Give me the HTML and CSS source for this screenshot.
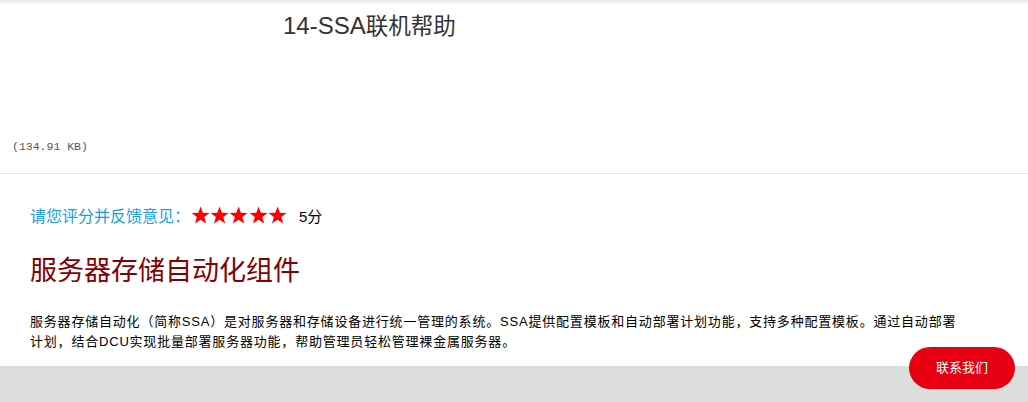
FILE: index.html
```html
<!DOCTYPE html>
<html lang="zh-CN">
<head>
    <meta charset="UTF-8">
    <meta name="viewport" content="width=device-width, initial-scale=1.0">
    <title>服务器存储自动化组件</title>
    <link rel="stylesheet" href="styles.css">
</head>
<body>
    <div class="doc-head">
        <h1 class="doc-title">14-SSA<span class="cjk">联机帮助</span></h1>
        <span class="doc-size">(134.91 KB)</span>
    </div>
    <main class="content">
        <div class="rating">
            <span class="rating-label">请您评分并反馈意见：</span>
            <span class="stars">
                <svg viewBox="0 0 20 19"><polygon points="10,0.5 12.4,7.1 19.5,7.3 13.9,11.6 15.9,18.5 10,14.5 4.1,18.5 6.1,11.6 0.5,7.3 7.6,7.1"/></svg>
                <svg viewBox="0 0 20 19"><polygon points="10,0.5 12.4,7.1 19.5,7.3 13.9,11.6 15.9,18.5 10,14.5 4.1,18.5 6.1,11.6 0.5,7.3 7.6,7.1"/></svg>
                <svg viewBox="0 0 20 19"><polygon points="10,0.5 12.4,7.1 19.5,7.3 13.9,11.6 15.9,18.5 10,14.5 4.1,18.5 6.1,11.6 0.5,7.3 7.6,7.1"/></svg>
                <svg viewBox="0 0 20 19"><polygon points="10,0.5 12.4,7.1 19.5,7.3 13.9,11.6 15.9,18.5 10,14.5 4.1,18.5 6.1,11.6 0.5,7.3 7.6,7.1"/></svg>
                <svg viewBox="0 0 20 19"><polygon points="10,0.5 12.4,7.1 19.5,7.3 13.9,11.6 15.9,18.5 10,14.5 4.1,18.5 6.1,11.6 0.5,7.3 7.6,7.1"/></svg>
            </span>
            <span class="score">5分</span>
        </div>
        <h2 class="product-title">服务器存储自动化组件</h2>
        <p class="product-desc">服务器存储自动化（简称SSA）是对服务器和存储设备进行统一管理的系统。SSA提供配置模板和自动部署计划功能，支持多种配置模板。通过自动部署计划，结合DCU实现批量部署服务器功能，帮助管理员轻松管理裸金属服务器。</p>
    </main>
    <footer class="site-footer"></footer>
    <a class="contact-btn" href="#">联系我们</a>
</body>
</html>
```

FILE: styles.css
```css
body {
    margin: 0;
    font-family: "Liberation Sans", "Noto Sans CJK SC", sans-serif;
    background-color: #fff;
    color: #000;
    box-shadow: inset 0 6px 6px -6px rgba(0, 0, 0, 0.2);
    min-height: 402px;
    display: flex;
    flex-direction: column;
}

.doc-head {
    height: 174px;
    border-bottom: 1px solid #e5e5e5;
    display: flex;
    flex-direction: column;
    box-sizing: border-box;
}

.doc-title {
    margin: 0;
    padding: 10px 0 0 283px;
    font-size: 24px;
    font-weight: normal;
    line-height: 32px;
    color: #333;
}

.doc-title .cjk {
    font-size: 22.5px;
}

.doc-size {
    margin-top: 97px;
    padding-left: 12px;
    font-family: "Liberation Mono", monospace;
    font-size: 11.5px;
    line-height: 14px;
    color: #555;
}

.content {
    padding: 30px 30px 0;
}

.rating {
    display: flex;
    align-items: center;
    height: 22px;
}

.rating-label {
    font-size: 16px;
    color: #1a9fe0;
}

.stars {
    display: flex;
    margin-left: 1px;
}

.stars svg {
    width: 19.2px;
    height: 18px;
    fill: #ff0000;
}

.score {
    font-size: 15px;
    margin-left: 12px;
}

.product-title {
    margin: 28px 0 0;
    font-size: 27px;
    font-weight: normal;
    line-height: 35px;
    color: #850000;
}

.product-desc {
    margin: 23px 0 0;
    max-width: 935px;
    font-size: 13px;
    line-height: 20px;
    letter-spacing: 0.8px;
    color: #000;
}

.site-footer {
    margin-top: 14px;
    flex: 1;
    background-color: #dcdedd;
}

.contact-btn {
    position: fixed;
    left: 909px;
    top: 347px;
    width: 106px;
    height: 42px;
    border-radius: 21px;
    background-color: #e60012;
    color: #fff;
    font-size: 13px;
    line-height: 42px;
    text-align: center;
    text-decoration: none;
}
```
